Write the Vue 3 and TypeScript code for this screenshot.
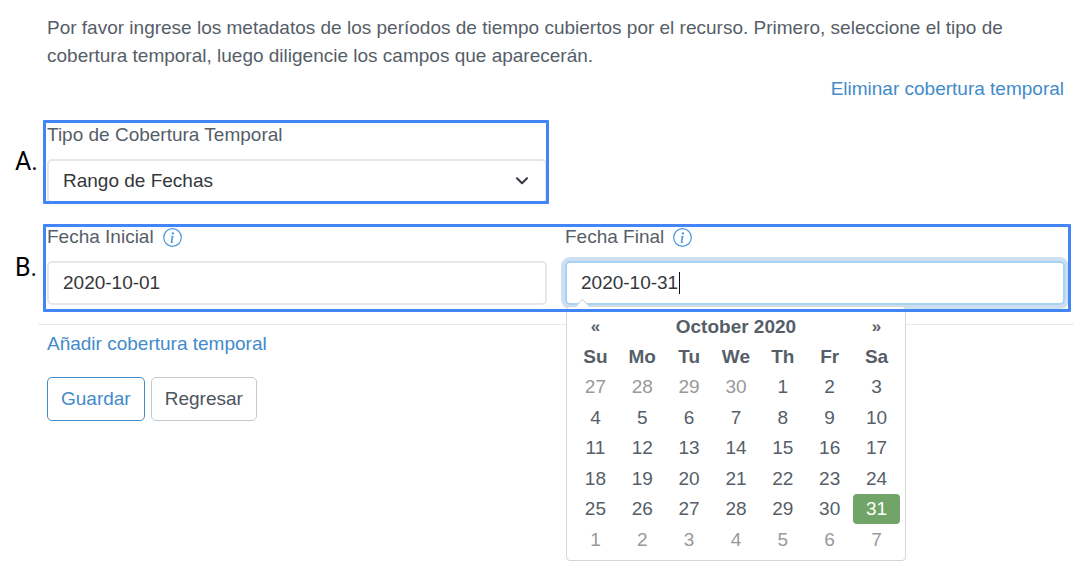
<script setup lang="ts">
import { ref } from 'vue'

interface Day {
  label: number
  value: string
  muted: boolean
}

const coverageType = ref('range')
const startDate = ref('2020-10-01')
const endDate = ref('2020-10-31')

const weekdays = ['Su', 'Mo', 'Tu', 'We', 'Th', 'Fr', 'Sa']

// Six weeks, starting on the Sunday before the first of October
const weeks: Day[][] = Array.from({ length: 6 }, (_, week) =>
  Array.from({ length: 7 }, (_, weekday) => {
    const date = new Date(Date.UTC(2020, 8, 27 + week * 7 + weekday))
    return {
      label: date.getUTCDate(),
      value: date.toISOString().slice(0, 10),
      muted: date.getUTCMonth() !== 9,
    }
  }),
)
</script>

<template>
  <main class="page">
    <p class="intro">
      Por favor ingrese los metadatos de los períodos de tiempo cubiertos por el recurso. Primero,
      seleccione el tipo de cobertura temporal, luego diligencie los campos que aparecerán.
    </p>
    <div class="remove"><a href="#">Eliminar cobertura temporal</a></div>

    <form @submit.prevent>
      <div class="step">
        <span class="mark">A.</span>
        <div class="frame frame-type">
          <div class="label">
            <label for="type">Tipo de Cobertura Temporal</label>
          </div>
          <div class="control">
            <select id="type" v-model="coverageType" class="input">
              <option value="range">Rango de Fechas</option>
            </select>
            <svg class="chevron" viewBox="0 0 14 10" aria-hidden="true">
              <path d="M2 2.2 L7 7.2 L12 2.2" />
            </svg>
          </div>
        </div>
      </div>

      <div class="step">
        <span class="mark">B.</span>
        <div class="frame frame-dates">
          <div class="field">
            <div class="label">
              <label for="start">Fecha Inicial</label>
              <svg class="info" viewBox="0 0 16 16" aria-hidden="true">
                <circle cx="8" cy="8" r="7.4" />
                <path d="m8.93 6.588-2.29.287-.082.38.45.083c.294.07.352.176.288.469l-.738 3.468c-.194.897.105 1.319.808 1.319.545 0 1.178-.252 1.465-.598l.088-.416c-.2.176-.492.246-.686.246-.275 0-.375-.193-.304-.533zM9.3 4.5a1 1 0 1 1-2 0 1 1 0 0 1 2 0z" />
              </svg>
            </div>
            <input id="start" v-model="startDate" class="input" type="text" />
          </div>
          <div class="field">
            <div class="label">
              <label for="end">Fecha Final</label>
              <svg class="info" viewBox="0 0 16 16" aria-hidden="true">
                <circle cx="8" cy="8" r="7.4" />
                <path d="m8.93 6.588-2.29.287-.082.38.45.083c.294.07.352.176.288.469l-.738 3.468c-.194.897.105 1.319.808 1.319.545 0 1.178-.252 1.465-.598l.088-.416c-.2.176-.492.246-.686.246-.275 0-.375-.193-.304-.533zM9.3 4.5a1 1 0 1 1-2 0 1 1 0 0 1 2 0z" />
              </svg>
            </div>
            <div class="control">
              <input id="end" v-model="endDate" class="input active" type="text" />
              <span class="caret" aria-hidden="true"></span>
              <div class="picker">
                <table>
                  <thead>
                    <tr>
                      <th><button class="nav" type="button">«</button></th>
                      <th colspan="5">October 2020</th>
                      <th><button class="nav" type="button">»</button></th>
                    </tr>
                    <tr>
                      <th v-for="name in weekdays" :key="name" scope="col">{{ name }}</th>
                    </tr>
                  </thead>
                  <tbody>
                    <tr v-for="week in weeks" :key="week[0].value">
                      <td v-for="day in week" :key="day.value">
                        <button
                          type="button"
                          :class="{ muted: day.muted, selected: day.value === endDate }"
                          @click="endDate = day.value"
                        >
                          {{ day.label }}
                        </button>
                      </td>
                    </tr>
                  </tbody>
                </table>
              </div>
            </div>
          </div>
        </div>
      </div>

      <div class="footer">
        <a href="#">Añadir cobertura temporal</a>
        <div class="actions">
          <button class="btn primary" type="submit">Guardar</button>
          <button class="btn" type="button">Regresar</button>
        </div>
      </div>
    </form>
  </main>
</template>

<style>
body {
  margin: 0;
  background: #fff;
}
</style>

<style scoped>
* {
  box-sizing: border-box;
}

.page {
  min-height: 100vh;
  padding: 14px 6px 14px 0;
  font-family: 'Liberation Sans', Arial, Helvetica, sans-serif;
  font-size: 19px;
  line-height: 28px;
  color: #565e68;
}

a {
  color: #428bca;
  text-decoration: none;
}

.intro {
  margin: 0 48px 0 47px;
}

.remove {
  margin: 5px 10px 0 0;
  text-align: right;
}

.step {
  display: grid;
  grid-template-columns: 43px minmax(0, 1fr);
  align-items: center;
  margin: 17px 3px 0 0;
}

.step + .step {
  margin-top: 20px;
}

.mark {
  padding-left: 15px;
  font-family: Roboto, sans-serif;
  font-size: 25px;
  color: #000;
}

.frame {
  position: relative;
}

/* The outline is drawn over the fields and the open calendar */
.frame::after {
  content: '';
  position: absolute;
  inset: 0;
  z-index: 3;
  border: 3px solid #4285f4;
  border-radius: 1px;
  pointer-events: none;
}

.frame-type {
  width: calc(50% - 8px);
  padding: 2px 2px 1px 4px;
}

.frame-dates {
  display: grid;
  grid-template-columns: 1fr 1fr;
  gap: 18px;
  padding: 0 6px 7px 4px;
}

.label {
  display: flex;
  align-items: center;
  gap: 9px;
  margin-bottom: 11px;
  line-height: 26px;
}

.info {
  width: 19px;
  height: 19px;
  fill: #4a97dc;
}

.info circle {
  fill: none;
  stroke: #4a97dc;
  stroke-width: 1;
}

.control {
  position: relative;
}

.input {
  display: block;
  width: 100%;
  height: 44px;
  padding: 0 14px;
  border: 2px solid #e4e8ec;
  border-radius: 5px;
  outline: 0;
  appearance: none;
  background: #fff;
  font: inherit;
  color: #34373b;
}

.input.active {
  border-color: #a9d3f2;
  box-shadow: 0 0 0 4px #cddff0;
}

.chevron {
  position: absolute;
  top: 17px;
  right: 18px;
  width: 14px;
  height: 10px;
  fill: none;
  stroke: #343a40;
  stroke-width: 2;
  stroke-linecap: round;
  stroke-linejoin: round;
  pointer-events: none;
}

.caret {
  position: absolute;
  top: 11px;
  left: 114px;
  width: 1px;
  height: 22px;
  background: #111;
}

.picker {
  position: absolute;
  top: 45px;
  left: 1px;
  z-index: 2;
  width: 340px;
  padding: 5px;
  border: 1px solid #d4d5d7;
  border-radius: 4px;
  background: #fff;
}

.picker::before {
  content: '';
  position: absolute;
  top: -6px;
  left: 10px;
  width: 10px;
  height: 10px;
  border: solid #d4d5d7;
  border-width: 1px 0 0 1px;
  background: linear-gradient(135deg, #fff 50%, transparent 50%);
  transform: rotate(45deg);
}

table {
  width: 100%;
  height: 243px;
  border-spacing: 0;
  table-layout: fixed;
  text-align: center;
}

th,
td {
  height: 30px;
  padding: 0;
}

.picker button {
  display: block;
  width: 100%;
  height: 30px;
  padding: 0;
  border: 0;
  border-radius: 4px;
  background: none;
  font: inherit;
  color: inherit;
}

.picker .nav {
  font-size: 17px;
}

.picker .muted {
  color: #999;
}

.picker .selected {
  background: #70a567;
  color: #fff;
}

.footer {
  margin: 12px 0 0 38px;
  padding: 5px 9px 0;
  border-top: 1px solid #e6e8eb;
}

.actions {
  display: flex;
  gap: 6px;
  margin-top: 19px;
}

.btn {
  height: 44px;
  padding: 0 13px;
  border: 1px solid #c3c8ce;
  border-radius: 5px;
  background: #fff;
  font: inherit;
  color: #4d545c;
}

.btn.primary {
  border-color: #428bca;
  color: #428bca;
}
</style>
